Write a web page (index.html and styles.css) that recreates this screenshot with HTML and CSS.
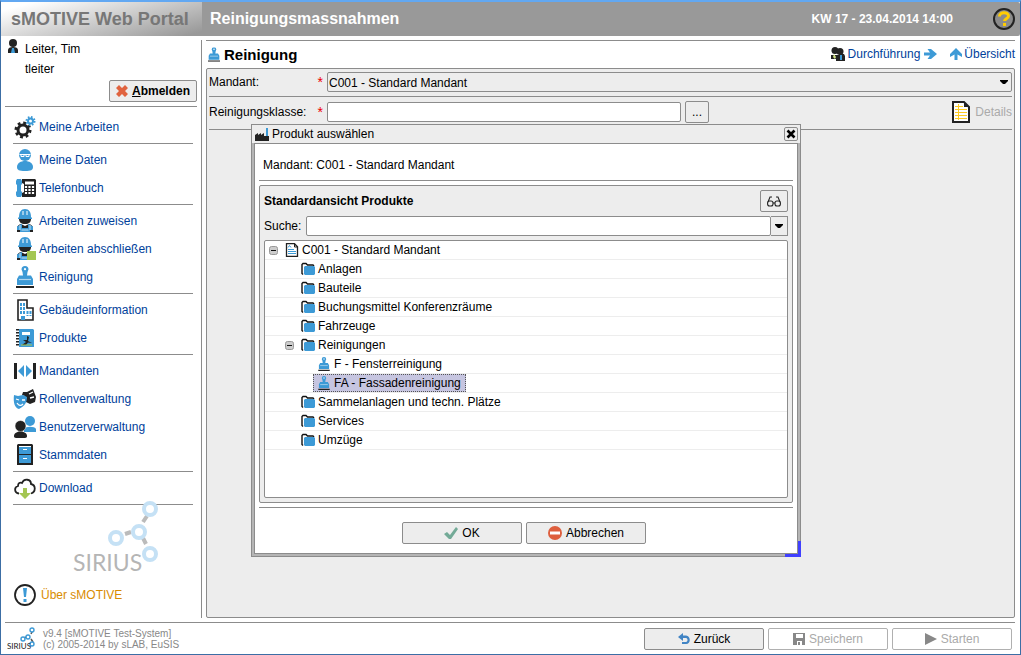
FILE: index.html
```html
<!DOCTYPE html>
<html lang="de">
<head>
<meta charset="utf-8">
<title>sMOTIVE Web Portal</title>
<link rel="stylesheet" href="styles.css">
</head>
<body>
<svg class="defs" aria-hidden="true">
  <symbol id="brush" viewBox="0 0 18 22">
    <path class="blue" d="M7 9.500L6.500 6 5.500 3.500a3.500 3.500 0 0 1 7 0L11.500 6 11 9.500h4l2 3.500v6H1v-6l2-3.500z"/>
    <circle cx="9" cy="3.200" r="1.100" fill="#fff"/>
    <path d="M3 13.500h12" stroke="#fff" stroke-width="1.200" opacity=".6"/>
    <path class="ink" d="M0 20h18v2H0z"/>
  </symbol>
  <symbol id="folder" viewBox="0 0 14 14">
    <path d="M2 12.500l-1-1v-9L2 1.500h3L6.500 3H12l1 1" fill="none" stroke="#111" stroke-width="1.400"/>
    <path class="blue" d="M3 5l1-1h9l1 1v7l-1 1H4l-1-1z"/>
  </symbol>
  <symbol id="minus" viewBox="0 0 9 9">
    <rect x=".5" y=".5" width="8" height="8" rx="2" fill="#ccc" stroke="#999"/>
    <path d="M2 4.500h5" stroke="#111"/>
  </symbol>
  <symbol id="worker" viewBox="0 0 18 24">
    <path class="blue" d="M3 8C3 3 5 0 9 0s6 3 6 8l1 1v1H2V9z"/>
    <path d="M7 2v4M11 2v4" stroke="#fff"/>
    <path class="ink" d="M3 10h12c0 3-2 5-6 5s-6-2-6-5z"/>
    <path class="ink" d="M1 23v-4c0-2 2-3.500 4-4l4 2 4-2c2 .5 4 2 4 4v4z"/>
    <path class="blue" d="M4 15.500l2-.5v4h6v-4l2 .5V23H4z"/>
    <path class="blue" d="M1 17.500L4 16v5H1zM14 16l3 1.500V21h-3z"/>
    <path d="M5.500 21h7M4 16v5M14 16v5" stroke="#fff" stroke-width=".7"/>
  </symbol>
  <symbol id="down" viewBox="0 0 8 4"><path d="M0 0h8v1L5 4H3L0 1z" fill="#000"/></symbol>
</svg>

<div class="window">
  <header class="banner">
    <div class="brand">sMOTIVE Web Portal</div>
    <h1>Reinigungsmassnahmen</h1>
    <time>KW 17 - 23.04.2014 14:00</time>
    <button class="help" aria-label="Hilfe">
      <svg viewBox="0 0 22 22" width="22" height="22"><circle cx="11" cy="11" r="10" fill="#8b8b8b" stroke="#222" stroke-width="2"/><path d="M6.500 8.500c0-5 9-5 9-.5 0 2.500-4 3-4 5" fill="none" stroke="#fc0" stroke-width="3"/><path d="M10 15h3v3h-3z" fill="#fc0"/></svg>
    </button>
  </header>

  <div class="columns">
    <aside class="sidebar">
      <div class="user">
        <svg viewBox="0 0 12 14" width="12" height="14"><circle class="ink" cx="6" cy="4" r="4"/><path class="ink" d="M1 14v-3c0-2 2-3 5-3s5 1 5 3v3z"/><path class="blue" d="M5 9h2l1 5H4z"/></svg>
        <div>Leiter, Tim<br>tleiter</div>
      </div>
      <div class="logout">
        <button class="btn strong"><svg viewBox="0 0 12 12" width="12" height="12"><path d="M3 0l3 3 3-3 3 3-3 3 3 3-3 3-3-3-3 3-3-3 3-3-3-3z" fill="#e0633f"/></svg><span><u>A</u>bmelden</span></button>
      </div>
      <nav>
        <ul>
          <li><a href="#"><svg viewBox="0 0 22 22"><circle cx="9" cy="14" r="5" fill="none" stroke="#222" stroke-width="3"/><circle cx="9" cy="14" r="7" fill="none" stroke="#222" stroke-width="3" stroke-dasharray="2.750 2.750"/><circle cx="16.500" cy="5" r="2.500" fill="none" stroke="#3d9ad6" stroke-width="2"/><circle cx="16.500" cy="5" r="4" fill="none" stroke="#3d9ad6" stroke-width="2" stroke-dasharray="1.570 1.570"/></svg>Meine Arbeiten</a></li>
        </ul>
        <ul>
          <li><a href="#"><svg viewBox="0 0 22 22"><circle class="blue" cx="11" cy="6" r="6"/><path class="blue" d="M3 18c0-4 4-6 8-6s8 2 8 6c0 3-2 4-8 4s-8-1-8-4z"/><path d="M5.500 5.500h11M7 5.500v2h3v-2M12 5.500v2h3v-2" fill="none" stroke="#fff"/></svg>Meine Daten</a></li>
          <li><a href="#"><svg viewBox="0 0 22 22"><path class="blue" d="M2 4l1-2h4l1 2v3L7 8v6l1 1v3l-1 2H3l-1-2v-3l1-1V8L2 7z"/><path class="ink" d="M8 2h13l1 1v16l-1 1H8v-4l2-1V7L8 6z"/><path d="M11 4.500h9v3h-9z" fill="#fff"/><path d="M12 9v8M15.500 9v8M19 9v8" stroke="#fff" stroke-width="2.200" stroke-dasharray="2 1"/></svg>Telefonbuch</a></li>
        </ul>
        <ul>
          <li><a href="#"><svg viewBox="0 0 22 22"><use href="#worker" x="2" y="-1" width="18" height="24"/></svg>Arbeiten zuweisen</a></li>
          <li><a href="#"><svg viewBox="0 0 22 22"><use href="#worker" x="2" y="-1" width="18" height="24"/><path d="M13 13h9v9h-9z" fill="#a4c653"/></svg>Arbeiten abschließen</a></li>
          <li><a href="#"><svg viewBox="0 0 22 22"><use href="#brush" x="2" width="18" height="22"/></svg>Reinigung</a></li>
        </ul>
        <ul>
          <li><a href="#"><svg viewBox="0 0 22 22"><path d="M4 21V1h9v8h6v12z" fill="#fff" stroke="#222" stroke-width="1.600"/><path d="M7 4v12M10 4v12M13.500 12v5M16.500 12v5" stroke="#3d9ad6" stroke-width="2" stroke-dasharray="3 1"/><path class="blue" d="M7 17h4v4H7z"/></svg>Gebäudeinformation</a></li>
          <li><a href="#"><svg viewBox="0 0 22 22"><path class="blue" d="M5 2h14l1 1v17H5z"/><path d="M3.500 2v18" stroke="#222" stroke-width="3" stroke-dasharray="1.500 1.500"/><path d="M8 5h8v3H8z" fill="#fff"/><path d="M13 13V9l2 1-1 4 4 2-4-.5-2 2.500H8l4-3-3-2z" fill="#222"/><path d="M7 18h11" stroke="#a4c653"/></svg>Produkte</a></li>
        </ul>
        <ul>
          <li><a href="#"><svg viewBox="0 0 22 22"><path class="ink" d="M0 3h3v16H0zM19 3h3v16h-3z"/><path class="blue" d="M4 11l6-6v12zM18 11l-6-6v12z"/></svg>Mandanten</a></li>
          <li><a href="#"><svg viewBox="0 0 22 22"><path class="ink" d="M9 4l4 0 6-3 3 8-1 5-5 2-4-2-1-6-3-1z"/><path d="M15 6l4-2M16 10l4-1" stroke="#fff" stroke-width="1.300"/><path class="blue" d="M0 7l4 1 5-1 4 2c0 5-2 9-8 12-4-1-6-6-5-14z"/><path d="M2 11l3 1M8 12l3 0M3 15c2 3 4 3 6 1" fill="none" stroke="#fff" stroke-width="1.300"/></svg>Rollenverwaltung</a></li>
          <li><a href="#"><svg viewBox="0 0 22 22"><circle class="blue" cx="16" cy="5" r="5"/><path class="blue" d="M10 16v-3c1-3 11-3 12 0v3z"/><circle class="ink" cx="6.500" cy="10" r="5.500" stroke="#fff" stroke-width=".5"/><path class="ink" d="M0 20c0-6 13-6 13 0 0 2-1 2-6.500 2S0 22 0 20z"/></svg>Benutzerverwaltung</a></li>
          <li><a href="#"><svg viewBox="0 0 22 22"><path class="ink" d="M4 0h14l1 1v20H3V1z"/><path class="blue" d="M5 2h12v8H5zM5 11h12v8H5z"/><path d="M9 5.500h4M9 14.500h4M5 2.500h12" stroke="#fff"/></svg>Stammdaten</a></li>
        </ul>
        <ul>
          <li><a href="#"><svg viewBox="0 0 22 22"><path d="M5 16.500C0 16 0 10 4 9c0-3 2-4 4-3 2-5 9-4 9 1 5 1 5 8 0 9.500" fill="none" stroke="#222" stroke-width="1.800"/><path d="M9 11h4v5h4l-6 6-6-6h4z" fill="#a4c653"/></svg>Download</a></li>
        </ul>
      </nav>
      <div class="mark">
        <svg viewBox="0 0 90 76" width="90" height="76"><g fill="none" stroke="#bbb" stroke-width="4"><path d="M52 33l6-2M70 21l4-6M70 37l3 6"/></g><g fill="#fff" stroke="#c5e1f5" stroke-width="4"><circle cx="43" cy="37" r="6"/><circle cx="66" cy="31" r="6"/><circle cx="77" cy="8" r="6"/><circle cx="77" cy="53" r="6"/></g><text x="0" y="70" class="mark-text">SIRIUS</text></svg>
      </div>
      <a class="about" href="#"><svg viewBox="0 0 22 22" width="22" height="22"><circle cx="11" cy="11" r="10" fill="#fff" stroke="#222" stroke-width="1.800"/><path class="blue" d="M9 4h4l-1 9h-2zM9.500 15h3v3h-3z"/></svg>Über sMOTIVE</a>
    </aside>

    <main>
      <div class="title">
        <svg viewBox="0 0 18 22" width="12" height="15"><use href="#brush"/></svg>
        <h2>Reinigung</h2>
        <a href="#"><svg viewBox="0 0 14 14" width="14" height="14"><circle class="ink" cx="4" cy="3.500" r="3.500"/><circle class="ink" cx="9" cy="4.500" r="3.500"/><path class="ink" d="M0 12V8h8v-1h5l1 2v5H5v-2z"/><path d="M3 7l2 3-1 2-2-2z" fill="#d5e58a"/><path class="blue" d="M9 8h2v5H9z"/></svg><span>Durchführung</span><svg viewBox="0 0 14 14" width="14" height="14"><path class="blue" d="M1 5.500h6L4.500 2h3.500l6 5-6 5H4.500L7 8.500H1z"/></svg></a>
        <a href="#"><svg viewBox="0 0 14 14" width="14" height="14"><path class="blue" d="M5.500 13V7.500L1 10V7l6-6 6 6v3L8.500 7.500V13z"/></svg>Übersicht</a>
      </div>
      <form class="panel">
        <div class="row">
          <label for="mandant">Mandant: <b>*</b></label>
          <div class="select"><select id="mandant"><option>C001 - Standard Mandant</option></select><svg width="8" height="4"><use href="#down"/></svg></div>
        </div>
        <div class="row tall">
          <label for="klasse">Reinigungsklasse: <b>*</b></label>
          <input id="klasse" type="text">
          <button class="btn more" type="button">...</button>
          <span class="details"><svg viewBox="0 0 18 22" width="18" height="22"><path d="M1 1h11l5 5v15H1z" fill="#fff" stroke="#222" stroke-width="2"/><path d="M12 1v5h5z" fill="#222"/><path d="M3 5.500h8M3 8.500h12M3 11.500h12M3 14.500h12M3 17.500h12M6.500 3v16" stroke="#fc2"/></svg>Details</span>
        </div>
      </form>
    </main>
  </div>

  <footer>
    <svg viewBox="0 0 28 24" width="28" height="24"><path d="M16 11l4-1M24 7l2-4M24 12l2 3" stroke="#555" stroke-width="1.500"/><g fill="#fff" stroke="#3d9ad6" stroke-width="1.400"><circle cx="16" cy="12" r="2"/><circle cx="21" cy="10" r="2"/><circle cx="25" cy="3" r="2"/><circle cx="25" cy="17" r="2"/></g><text x="0" y="22" class="mini-text">SIRIUS</text></svg>
    <p>v9.4 [sMOTIVE Test-System]<br>(c) 2005-2014 by sLAB, EuSIS</p>
    <button class="btn wide"><svg viewBox="0 0 12 12" width="12" height="12"><path d="M0 4l5-4v2.500h3C13 3 13 11 8 11H4V9h4c2-.5 2-3.500 0-4H5v3z" fill="#4184c4"/></svg>Zurück</button>
    <button class="btn wide" disabled><svg viewBox="0 0 12 12" width="12" height="12"><path d="M0 0h12v12H9V8H4v4H0zM3 1v4h7V1z" fill="#888" fill-rule="evenodd"/><path d="M5 9h2v3H5z" fill="#888"/></svg>Speichern</button>
    <button class="btn wide" disabled><svg viewBox="0 0 12 12" width="12" height="12"><path d="M0 0l12 6-12 6z" fill="#888"/></svg>Starten</button>
  </footer>

  <section class="dialog" role="dialog" aria-labelledby="dlg-title">
    <div class="dialog-bar">
      <svg viewBox="0 0 14 14" width="14" height="14"><path class="blue" d="M11 1h2v10h-2z"/><path class="ink" d="M0 14V8l3-2v2l3-2v2l3-2v3h5v5z"/></svg>
      <h3 id="dlg-title">Produkt auswählen</h3>
      <button class="btn close" aria-label="Schließen"><svg viewBox="0 0 10 10" width="10" height="10"><path d="M1.500 1.500l7 7M8.500 1.500l-7 7" stroke="#000" stroke-width="2.600"/></svg></button>
    </div>
    <div class="dialog-body">
      <p class="context">Mandant: C001 - Standard Mandant</p>
      <div class="picker">
        <div class="picker-head">
          <h4>Standardansicht Produkte</h4>
          <button class="btn glasses" aria-label="Ansicht"><svg viewBox="0 0 14 11" width="14" height="11" fill="none" stroke="#222" stroke-width="1.100"><rect x=".6" y="5" width="5.400" height="5" rx="2"/><rect x="8" y="5" width="5.400" height="5" rx="2"/><path d="M6 7h2M1 6l2-5h2M13 6l-2-5H9"/></svg></button>
        </div>
        <div class="search">
          <label for="suche">Suche:</label>
          <input id="suche" type="text">
          <button class="drop" aria-label="Suchverlauf"><svg width="8" height="4"><use href="#down"/></svg></button>
        </div>
        <ul class="tree" role="tree">
          <li class="l1"><i><svg><use href="#minus"/></svg></i><span><svg viewBox="0 0 14 14"><path d="M1.500 .7h8l3 3v9.600h-11z" fill="#fff" stroke="#222" stroke-width="1.300"/><path d="M9.500 1v3h3" fill="none" stroke="#222"/><path d="M3 4.500l1.500-2 1.500 2M3 6.500h6M3 8.500h8M3 10.500h8" fill="none" stroke="#3d9ad6"/></svg>C001 - Standard Mandant</span></li>
          <li class="l2"><i></i><span><svg><use href="#folder"/></svg>Anlagen</span></li>
          <li class="l2"><i></i><span><svg><use href="#folder"/></svg>Bauteile</span></li>
          <li class="l2"><i></i><span><svg><use href="#folder"/></svg>Buchungsmittel Konferenzräume</span></li>
          <li class="l2"><i></i><span><svg><use href="#folder"/></svg>Fahrzeuge</span></li>
          <li class="l2"><i><svg><use href="#minus"/></svg></i><span><svg><use href="#folder"/></svg>Reinigungen</span></li>
          <li class="l3"><i></i><span><svg><use href="#brush"/></svg>F - Fensterreinigung</span></li>
          <li class="l3"><i></i><span class="selected"><svg><use href="#brush"/></svg>FA - Fassadenreinigung</span></li>
          <li class="l2"><i></i><span><svg><use href="#folder"/></svg>Sammelanlagen und techn. Plätze</span></li>
          <li class="l2"><i></i><span><svg><use href="#folder"/></svg>Services</span></li>
          <li class="l2"><i></i><span><svg><use href="#folder"/></svg>Umzüge</span></li>
        </ul>
      </div>
      <div class="actions">
        <button class="btn wide"><svg viewBox="0 0 14 12" width="14" height="12"><path d="M0 7l3-2 3 3 6-8 2 2-7 10H5z" fill="#73aa97"/></svg>OK</button>
        <button class="btn wide"><svg viewBox="0 0 14 14" width="14" height="14"><circle cx="7" cy="7" r="7" fill="#de5f3e"/><path d="M2 5.500h10v3H2z" fill="#fff"/></svg>Abbrechen</button>
      </div>
    </div>
    <span class="grip"></span>
  </section>
</div>
</body>
</html>
```

FILE: styles.css
```css
* { box-sizing: border-box; }
body, h1, h2, h3, h4, p, ul { margin: 0; padding: 0; }
body, button, input, select { font: 12px/20px "Liberation Sans", Arial, sans-serif; color: #000; }
ul { list-style: none; }
a { color: #00419b; text-decoration: none; }
svg { display: block; flex: none; }
button { cursor: pointer; }

.defs { position: absolute; width: 0; height: 0; }
.blue { fill: #3d9ad6; }
.ink { fill: #222; }

.window {
  position: relative;
  display: flex;
  flex-direction: column;
  min-height: 100vh;
  border: 1px solid #3c6ea5;
  border-top: 2px solid #62a8f2;
  background: #fff;
}

/* banner */
.banner {
  display: flex;
  align-items: center;
  height: 34px;
  padding-right: 5px;
  border-radius: 2px;
  background: #999;
  color: #fff;
  font-weight: bold;
}
.brand {
  width: 201px;
  padding-left: 10px;
  line-height: 34px;
  font-size: 18px;
  color: #777;
  background: linear-gradient(165deg, #fff 10%, #999 95%);
}
.banner h1 { flex: 1; padding-left: 8px; font-size: 16px; }
.banner time { margin-right: 40px; }
.help { padding: 0; border: 0; background: none; }

/* controls */
.btn {
  display: flex;
  align-items: center;
  justify-content: center;
  gap: 4px;
  height: 22px;
  padding: 0 6px;
  border: 1px solid #8c8c8c;
  border-radius: 2px;
  background: #ededed;
}
.btn.wide { width: 120px; }
.btn.strong { font-weight: bold; }
.btn:disabled { background: #fff; border-color: #b0b0b0; color: #aaa; }
input, select {
  height: 20px;
  padding: 0 2px;
  border: 1px solid #8c8c8c;
  border-radius: 2px;
  background: #fff;
}

.columns { flex: 1; display: flex; padding-top: 4px; }

/* sidebar */
.sidebar {
  display: flex;
  flex-direction: column;
  width: 201px;
  padding: 0 4px;
  border-right: 1px solid #8c8c8c;
}
.user { display: flex; gap: 6px; margin-top: -1px; padding: 0 0 1px 2px; }
.logout {
  display: flex;
  justify-content: flex-end;
  padding-bottom: 4px;
  border-bottom: 1px solid #8c8c8c;
}
nav { padding: 4px 4px 0 8px; }
nav ul { padding: 2px 0; border-bottom: 1px solid #8c8c8c; }
nav a { display: flex; align-items: center; gap: 3px; height: 28px; padding-left: 1px; }
nav svg { width: 22px; height: 22px; overflow: visible; }
.mark { align-self: flex-end; padding-right: 34px; margin-top: -4px; }
.mark-text { font: 23px Lato, sans-serif; fill: #b5b5b5; }
.about { display: flex; align-items: center; gap: 5px; margin-top: 7px; padding-left: 9px; color: #d98c00; }

/* main area */
main { flex: 1; display: flex; flex-direction: column; padding: 0 5px 0 4px; }
.title { display: flex; align-items: center; gap: 4px; height: 28px; border-top: 1px solid #8c8c8c; }
.title > svg { margin-left: 2px; }
.title h2 { flex: 1; font-size: 15px; }
.title a { display: flex; align-items: center; gap: 3px; margin-left: 8px; padding-bottom: 2px; }
.title a:last-child { gap: 1px; }
.panel { flex: 1; padding: 2px; border: 1px solid #8c8c8c; border-radius: 2px; background: #ededed; }
.row { display: flex; align-items: center; gap: 4px; height: 26px; padding-bottom: 4px; border-bottom: 1px solid #8c8c8c; }
.row.tall { height: 33px; padding-bottom: 2px; }
.row label { display: flex; justify-content: space-between; width: 114px; }
.row b { color: #e00; font-weight: normal; font-size: 14px; }
.row input { flex: 0 1 354px; min-width: 0; }
.select { flex: 1; display: grid; align-items: center; }
.select select, .select svg { grid-area: 1 / 1; }
.select select { width: 100%; padding: 0 1px; appearance: none; background: #ededed; }
.select svg { justify-self: end; margin-right: 4px; pointer-events: none; }
.details { display: flex; align-items: center; gap: 5px; margin-left: auto; color: #aaa; }

/* footer */
footer { display: flex; align-items: center; gap: 4px; height: 32px; margin: 4px 5px 0 4px; padding-right: 3px; border-top: 1px solid #8c8c8c; }
footer > svg { margin-left: 2px; }
footer p { flex: 1; padding-left: 4px; font-size: 10px; line-height: 11px; color: #888; }
.mini-text { font: 8px Lato, sans-serif; fill: #222; }

/* dialog */
.dialog {
  position: absolute;
  left: 250px;
  top: 122px;
  width: 550px;
  padding: 0 2px 2px;
  border: 1px solid #8c8c8c;
  background: #b5b5b5;
}
.dialog-bar { display: flex; align-items: center; gap: 3px; height: 18px; margin: 0 -2px; padding: 0 2px 0 3px; background: #ededed; }
.dialog-bar h3 { flex: 1; font-weight: normal; font-size: 12px; }
.close { width: 14px; height: 14px; padding: 0; }
.dialog-body { padding: 11px 4px 9px; border: 1px solid #8c8c8c; background: #fff; }
.context { padding: 0 4px 5px; border-bottom: 1px solid #8c8c8c; }
.picker { margin-top: 4px; padding: 4px; border: 1px solid #8c8c8c; border-radius: 2px; background: #ededed; }
.picker-head { display: flex; align-items: center; justify-content: space-between; }
.picker-head h4 { font-size: 12px; }
.glasses { width: 28px; }
.search { display: flex; align-items: center; margin: 4px 0; }
.search label { width: 42px; }
.search input { flex: 1; min-width: 0; }
.drop { display: grid; place-items: center; width: 17px; height: 20px; padding: 0; border: 1px solid #8c8c8c; border-left: 0; background: #ededed; }
.tree { height: 258px; border: 1px solid #8c8c8c; border-radius: 2px; background: #fff; }
.tree li { display: flex; align-items: center; gap: 3px; height: 19px; border-bottom: 1px solid #ededed; }
.tree i, .tree i svg { width: 9px; height: 9px; }
.tree span { display: flex; align-items: center; gap: 3px; height: 18px; padding: 0 2px 0 3px; border: 1px solid transparent; }
.tree span svg { width: 14px; height: 14px; }
.tree .selected { padding-right: 4px; border: 1px dotted #555; background: #c6c5e0; }
.l1 { padding-left: 4px; }
.l2 { padding-left: 20px; }
.l3 { padding-left: 36px; }
.actions { display: flex; justify-content: center; gap: 4px; margin-top: 4px; padding: 14px 4px 0 0; border-top: 1px solid #8c8c8c; }
.grip { position: absolute; right: -1px; bottom: -1px; width: 16px; height: 16px; border: solid #4040ff; border-width: 0 3px 3px 0; }
```
